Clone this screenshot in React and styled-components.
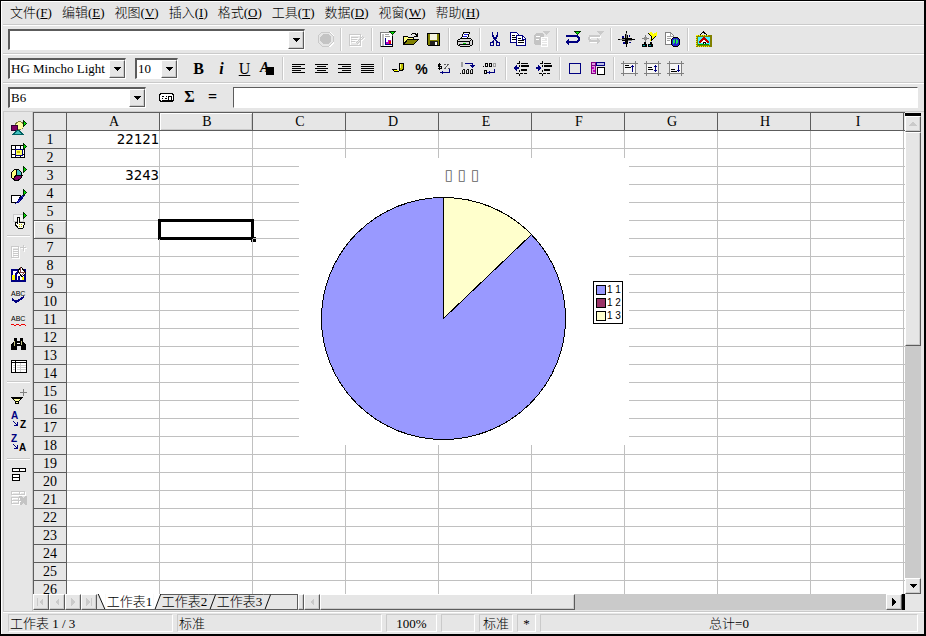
import React, { useState } from 'react'
import styled, { createGlobalStyle, css } from 'styled-components'

const face = '#e6e6e6'
const shade = '#cacaca'
const dark = '#5c5c5c'
const navy = '#000080'

const menus = [
  ['文件', 'F'],
  ['编辑', 'E'],
  ['视图', 'V'],
  ['插入', 'I'],
  ['格式', 'O'],
  ['工具', 'T'],
  ['数据', 'D'],
  ['视窗', 'W'],
  ['帮助', 'H'],
]

const columns = ['A', 'B', 'C', 'D', 'E', 'F', 'G', 'H', 'I', 'J']
const rows = Array.from({ length: 27 }, (_, i) => i + 1)
const cells = { A1: '22121', A3: '3243' }

const legend = [
  { label: '1 1', color: '#9999ff' },
  { label: '1 2', color: '#993366' },
  { label: '1 3', color: '#ffffcc' },
]

const greenFlag = (
  <>
    <path d="M10 0h7v1h-1v1h-1v1h-1v1h-1V3h-1V2h-1V1h-1z" fill="#003000" />
    <path d="M12 1h3v1h-1v1h-1V2h-1z" fill="#00e000" />
  </>
)
const sideFlag = (
  <>
    <path d="M13 0h1v1h1v1h1v1h1v1h-1v1h-1v1h-1v1h-1z" fill="#003000" />
    <path d="M14 2h1v1h1v1h-1v1h-1z" fill="#00e000" />
  </>
)
const embossed = (d) => (
  <>
    <path d={d} stroke="#fff" transform="translate(1 1)" />
    <path d={d} stroke={shade} />
  </>
)
const lines = (d) => <path d={d} stroke="#000" />
const indentLines = (
  <>
    {lines('M4 3.5h3M8 3.5h7M3 13.5h3M7 13.5h3M11 13.5h3M6.5 1v2M6.5 5v2M6.5 10v2M6.5 14v2')}
    <path d="M8 5h8v2H8zM8 9h6v2H8z" fill="#000" />
  </>
)
const cellFrame = (
  <>
    <path d="M3 4h11v9H3z" fill="#f6f6f6" />
    <path d="M2.5 1v15M14.5 1v15M0 3.5h17M0 13.5h17" stroke="#808080" />
  </>
)

const art = {
  stop: (
    <>
      <path d="M5 1h8l4 4v7l-4 4H5l-4-4V5z" fill="#fff" />
      <path d="M5 1h7l4 4v6l-4 4H5l-4-4V5z" fill={face} stroke={shade} />
      <path d="M6 3h5l3 3v4l-3 3H6l-3-3V6z" fill="#c4c4c4" />
    </>
  ),
  editFile: embossed('M1.5 3.5h11v11h-11zM3 6.5h7M3 8.5h6M3 10.5h4M8 12l7-7M9 13l7-7'),
  new: (
    <>
      <path d="M1.5 1.5h12v14h-12z" fill="#fff" stroke="#808080" />
      <path d="M13.5 5v10.5H2" stroke="#000" />
      <path d="M3 3h2v12H3z" fill="#c0c0c0" />
      <path d="M6 3.5h4M6 5.5h5" stroke="#a0a0a0" />
      <path d="M6.5 7v6.500h6" stroke={navy} />
      <path d="M7 13v-2h2V9h3v4z" fill="#c000c0" />
      <path d="M10 10h2v3h-2z" fill="#e00000" />
      {greenFlag}
    </>
  ),
  open: (
    <>
      <path d="M1.5 13.5V5.5h4l1 1h5v3" fill="#ffff80" stroke="#000" />
      <path d="M1.5 13.5l4-5h11l-5 5z" fill="#808000" stroke="#000" />
      <path d="M9 3.5l2-1h2l2 2M15.500 2v3H12" stroke="#000" />
    </>
  ),
  save: (
    <>
      <path d="M2.5 2.5h12v12h-11l-1-1z" fill="#808000" stroke="#000" />
      <path d="M5 3h7v6H5z" fill="#f4f4e0" />
      <path d="M5 10h8v4H5z" fill="#202020" />
      <path d="M10 11h2v3h-2z" fill="#fff" />
    </>
  ),
  print: (
    <>
      <path d="M5.5 7.5l2-6h6l-2 6" fill="#fff" stroke="#000" />
      <path d="M8 3.5h4M7 5.5h4" stroke="#2020e0" />
      <path d="M1.5 9.5l3-2h10l2 2v4l-3 2h-9l-3-2z" fill="#d8d8d8" stroke="#000" />
      <path d="M2 10.5h11l3-2M3 13.5h10M13.5 10v4" stroke="#000" />
      <path d="M7 12.5h3" stroke="#00c000" />
    </>
  ),
  cut: (
    <>
      <path d="M5.500 1v3l2 4M10.500 1v3l-2 4" stroke={navy} strokeWidth="1.500" />
      <path d="M8 8l-3 4M8 8l3 4" stroke={navy} />
      <circle cx="5" cy="13" r="2" stroke={navy} />
      <circle cx="11" cy="13" r="2" stroke={navy} />
    </>
  ),
  copy: (
    <>
      <path d="M.5 1.5h6l2 2v8h-8z" fill="#fff" stroke={navy} />
      <path d="M6.500 4.500h6l3 3v7h-9z" fill="#fff" stroke={navy} />
      <path d="M2 4.500h3M2 6.500h4M2 8.500h4M8 7.500h3M8 9.500h6M8 11.500h6" stroke="#000" />
      <path d="M12.500 5v3h3" stroke={navy} />
    </>
  ),
  paste: (
    <>
      <path d="M3 2h6l2 2v2h4v10H8v-2H2l-1-2V4z" fill="#c4c4c4" />
      <path d="M8.500 6.500h6v9h-6z" fill={face} stroke="#fff" />
      <path d="M9 8.500h3M9 10.500h5M9 12.500h5M3 5.500h4M3 8.500h3" stroke="#fff" />
      <path d="M10 0h7l-3.500 4z" fill={shade} />
    </>
  ),
  undo: (
    <>
      <path d="M2 5h11l2 2v2l-2 2H4" stroke={navy} strokeWidth="2" />
      <path d="M1 11l4-3v6z" fill={navy} />
      {greenFlag}
    </>
  ),
  redo: (
    <>
      <path d="M14 6H4L3 8l1 3h8" stroke="#fff" strokeWidth="2" />
      <path d="M13 5H3L2 7l1 3h8" stroke={shade} strokeWidth="2" />
      <path d="M10 7l4 3-4 3zM10 0h7l-3.500 4z" fill={shade} />
    </>
  ),
  navigator: (
    <>
      <path d="M8 0h1l1 7 7 1v1l-7 1-1 6H8l-1-6-7-1V8l7-1z" fill="#000" />
      <path d="M4 5h2v2H4zM11 4h1v2h-1zM5 11h2v2H5zM11 11h2v1h-2z" fill={navy} />
      <path d="M8.500 2v5M2 8.500h5M10 9.500h4" stroke="#fff" strokeWidth=".500" />
    </>
  ),
  stylist: (
    <>
      <path d="M4.500 4v8M1 7.500h7" stroke="#808080" />
      <path d="M3 6h3v3H3z" fill="#909090" />
      <path d="M7 2l3-1 2 2 4-2v3l-5 6H9l1-4z" fill="#ffff00" />
      <path d="M7 2l4 4-1 4M15 5l-4 4" stroke="#000" />
      <path d="M3 11h2v2h1v3H1v-3h2zM9 11h2v2h1v3H7v-3h2z" fill="#000" />
      <path d="M2 14h2v1H2zM8 14h2v1H8z" fill="#00a0a0" />
    </>
  ),
  hyperlink: (
    <>
      <path d="M1.500 1.500h5l3 3v9h-8z" fill="#fff" stroke="#808080" />
      <path d="M3 5.500h3M3 7.500h4M3 9.500h3M6.500 2v3h3" stroke="#a0a0a0" />
      <circle cx="11.500" cy="11" r="4.500" fill="#2020d0" stroke="#000" />
      <path d="M9 9l2-1v3l-2 2zM12 8l2 1v3l-2 1z" fill="#20e060" />
    </>
  ),
  gallery: (
    <>
      <path d="M5 4l3.500-3L12 4" stroke="#000" />
      <path d="M1.500 4.500h14v10h-14z" fill="#40f0ff" stroke="#808000" strokeWidth="2" />
      <path d="M1.500 4v11H15M2 4.500h12" stroke="#ffff00" strokeDasharray="1 1" />
      <path d="M4 12l5-5 5 5" fill="#fff" stroke="#c00000" strokeWidth="1.500" />
      <path d="M8.500 14v-3h2v3" fill="#fff" stroke="#000" />
      <path d="M3 13.500h11" stroke="#00a000" />
    </>
  ),
  fontColor: (
    <>
      <text x="1" y="12" fontFamily="Liberation Serif" fontSize="14" fontWeight="700" fontStyle="italic" fill="#000">A</text>
      <path d="M7 7h8v8H7z" fill="#000" />
    </>
  ),
  left: lines('M2 4.500h13M2 6.500h9M2 8.500h13M2 10.500h9M2 12.500h13'),
  center: lines('M2 4.500h13M4 6.500h9M2 8.500h13M4 10.500h9M2 12.500h13'),
  right: lines('M2 4.500h13M6 6.500h9M2 8.500h13M6 10.500h9M2 12.500h13'),
  justify: lines('M2 4.500h13M2 6.500h13M2 8.500h13M2 10.500h13M2 12.500h13'),
  currency: (
    <>
      <path d="M9.500 3.500h4v6l-2 1h-2z" fill="#c0c000" stroke="#000" />
      <path d="M2 9.500h5M3 10.500l2 1h4" stroke="#000" />
      <path d="M3 10h4l1 1H5z" fill="#ffff00" />
      <path d="M10.500 4v4" stroke="#ffff80" />
    </>
  ),
  standard: (
    <>
      <path d="M5 4.500H2v2h3v2H2M3.500 3v7" stroke="#000" />
      <path d="M8.500 9l4-5M8 4.500h2M12 8.500h2" stroke="#606060" />
      <path d="M13.500 9v3.500H6" stroke={navy} />
      <path d="M4 12.500l3-2v4z" fill={navy} />
    </>
  ),
  addDecimal: (
    <>
      <path d="M2.500 2.500h1v4h-1z" stroke="#a0a0a0" />
      <path d="M6 3.500h7.500v3" stroke={navy} />
      <path d="M11 5h5l-2.500 3z" fill={navy} />
      <path d="M1 13.500h1M3.500 9.500h2v4h-2zM7.500 9.500h2v4h-2zM11.500 9.500h2v4h-2z" stroke="#000" strokeWidth=".900" />
    </>
  ),
  delDecimal: (
    <>
      <path d="M1 6.500h1M3.500 3.500h2v3h-2zM7.500 3.500h2v3h-2zM2.500 10.500h2v3h-2z" stroke="#000" />
      <path d="M11.500 3.500h2v3h-2z" stroke="#a0a0a0" />
      <path d="M12.500 9v3.500H8" stroke={navy} />
      <path d="M5 12.500l3-2v4z" fill={navy} />
    </>
  ),
  outdent: (
    <>
      {indentLines}
      <path d="M2 8h4" stroke={navy} strokeWidth="2" />
      <path d="M0 8l4-3v6z" fill={navy} />
    </>
  ),
  indent: (
    <>
      {indentLines}
      <path d="M0 8h4" stroke={navy} strokeWidth="2" />
      <path d="M6 8L2 5v6z" fill={navy} />
    </>
  ),
  border: <path d="M2.500 3.500h11v10h-11z" stroke={navy} />,
  background: (
    <>
      <path d="M1.500 2.500h4v3h-4zM1.500 5.500h4v8h-4z" fill="#e0a0e0" stroke="#800080" />
      <path d="M6.500 2.500h8v3h-8z" fill="#c0c0e8" stroke={navy} />
      <path d="M2 7h2v2H2zM3 10h2v2H3z" fill="#c000c0" />
      <path d="M7.500 7.500h7v7h-7z" fill="#fff" stroke="#000" />
    </>
  ),
  top: (
    <>
      {cellFrame}
      {lines('M4 5.500h4M4 7.500h6')}
      <path d="M11.500 5v7M10 6.500h3" stroke={navy} />
    </>
  ),
  middle: (
    <>
      {cellFrame}
      {lines('M4 7.500h4M4 9.500h5')}
      <path d="M11.500 5v7M10 6.500h3M10 10.500h3" stroke={navy} />
    </>
  ),
  bottom: (
    <>
      {cellFrame}
      {lines('M4 9.500h4M4 11.500h6')}
      <path d="M11.500 5v7M10 10.500h3" stroke={navy} />
    </>
  ),
  wizard: (
    <>
      <path d="M2.500 4.500h12v1h1v6h-1v1h-12v-1h-1v-6h1z" fill="#fff" stroke="#000" />
      {lines('M4 7.500h2M8 7.500h1M11 7.500h3M4 9.500h1M7 9.500h2M10.500 7v4M13.500 7v4M4 11.500h10')}
    </>
  ),
  insert: (
    <>
      <circle cx="9.500" cy="5.500" r="4" fill="#ffffa0" stroke="#808040" />
      <path d="M1.500 5.500h6v5h-6z" fill="#800060" stroke="#300030" />
      <path d="M3 14.500l4-4h2l4 4z" fill="#40c0c0" stroke="#006060" />
      {sideFlag}
    </>
  ),
  insertCells: (
    <>
      <path d="M1.500 2.500h13v12h-13z" fill="#fff" stroke="#000" />
      <path d="M1 6.500h14M1 11.500h14M5.500 2v13M10.500 2v13" stroke="#000" />
      <path d="M5 6h7v6H5z" fill="#ffff60" stroke={navy} />
      <path d="M7 8h3v2H7z" fill="#c0c000" />
      {sideFlag}
    </>
  ),
  insertChart: (
    <>
      <circle cx="6.500" cy="9" r="5.500" fill="#ffff80" stroke="#000" />
      <path d="M6.500 9V3.500A5.500 5.500 0 0 1 12 9z" fill="#40c0c0" stroke="#000" />
      <path d="M6.500 9H12a5.500 5.500 0 0 1-9 4z" fill="#800060" stroke="#000" />
      {sideFlag}
    </>
  ),
  draw: (
    <>
      <path d="M1.500 6.500h9l-3 7h-6z" fill="#fff" stroke="#000" />
      <path d="M6 14l8-9 1 1-6 7z" fill="#4040e0" stroke={navy} />
      {sideFlag}
    </>
  ),
  form: (
    <>
      <path d="M3 2h10v7H3z" fill="#f4f4f4" stroke={shade} />
      <path d="M7.500 11V5.500H9V10h5v3l-1 3H8l-3-4v-2z" fill="#fffff0" stroke="#000" />
      <path d="M9 12.500h4M9 14.500h3" stroke="#c0c000" strokeDasharray="1 1" />
      {sideFlag}
    </>
  ),
  autoText: embossed('M1.500 3.500h7v11h-7zM3 6.500h5M3 8.500h5M3 10.500h5M3 12.500h5M10 4.500h6M13.500 2v6'),
  autoFormat: (
    <>
      <path d="M1.500 3.500h13v11h-13z" fill="#fff" stroke={navy} strokeWidth="2" />
      <path d="M2 14V9h3v5zM12 11h2v3h-2z" fill="#ffff00" />
      <path d="M5.500 14V8l3-2M9 10v4" stroke={navy} strokeWidth="2" />
      <path d="M8 5l3-4 5 6-4 4z" fill="#fff" stroke="#000" />
      <path d="M10.500 1v5M9 6h6l-3 3" stroke="#804040" />
    </>
  ),
  spellcheck: (
    <>
      <text x="1" y="7" fontFamily="Liberation Sans" fontSize="7" fill="#000">ABC</text>
      <path d="M2 10l4 3 8-5" stroke={navy} strokeWidth="2" />
    </>
  ),
  autoSpell: (
    <>
      <text x="1" y="9" fontFamily="Liberation Sans" fontSize="7" fill="#000">ABC</text>
      <path d="M1 13l2-1 2 1.500 3-1.500 2 1.500 3-1.500 3 1.500" stroke="#f00000" />
    </>
  ),
  find: (
    <>
      <path d="M4 3h3v3h3V3h3v3l3 4v5h-5v-4H7v4H1v-5l3-4z" fill="#000" />
      <path d="M4.500 6v5M11.500 6v4" stroke="#c0c080" />
      <path d="M7 8h3" stroke="#fff" />
    </>
  ),
  dataSource: (
    <>
      <path d="M1.500 2.500h15v12h-15z" fill="#fff" stroke="#000" />
      <path d="M2 4.500h14M5.500 3v11" stroke="#000" />
      <path d="M3 7.500h2M3 9.500h2M3 11.500h2M7 7.500h9M7 9.500h9M7 11.500h9M10.500 5v9" stroke="#d0d0d0" />
    </>
  ),
  filter: (
    <>
      <path d="M13.500 0v7M10 3.500h7" stroke="#808080" />
      <path d="M1.500 8.500h11l-4 4v2h-3v-2z" fill="#ffffa0" stroke="#000" />
      {lines('M2 9.500h10M5 12.500h4')}
    </>
  ),
  sortAsc: (
    <>
      <text x="1" y="7" fontFamily="Liberation Sans" fontSize="10" fontWeight="700" fill={navy}>A</text>
      <text x="10" y="16" fontFamily="Liberation Sans" fontSize="10" fontWeight="700" fill="#000">Z</text>
      <path d="M3 9l4 4M7.500 10v3.500H4" stroke={navy} />
    </>
  ),
  sortDesc: (
    <>
      <text x="1" y="7" fontFamily="Liberation Sans" fontSize="10" fontWeight="700" fill={navy}>Z</text>
      <text x="9" y="16" fontFamily="Liberation Sans" fontSize="10" fontWeight="700" fill="#000">A</text>
      <path d="M3 9l4 4M7.500 10v3.500H4" stroke={navy} />
    </>
  ),
  group: (
    <>
      <path d="M2.500 2.500h13v3h-13zM2.500 8.500h7v6h-7z" fill="#fff" stroke="#000" />
      {lines('M9.500 2v4M2 11.500h8')}
    </>
  ),
  ungroup: (
    <>
      <path d="M9 7h2l2 2 2-2h2v9h-2l-2-2-2 2H9z" fill="#c4c4c4" />
      {embossed('M1.500 2.500h13v3h-13zM1.500 8.500h7v6h-7zM9.500 2v4M2 11.500h8')}
    </>
  ),
  first: <path d="M4 4h1v8H4zM10 4v8L6 8z" fill={shade} />,
  prev: <path d="M10 4v8L6 8z" fill={shade} />,
  next: <path d="M6 4v8l4-4z" fill={shade} />,
  last: <path d="M10 4h1v8h-1zM5 4v8l4-4z" fill={shade} />,
  play: <path d="M6 4v8l4-4z" fill="#000" />,
  up: <path d="M4 10h8L8 5z" fill={shade} />,
  down: <path d="M4 6h8l-4 4z" fill="#000" />,
}

const tools = [
  ['stop'],
  ['editFile'],
  ['new', 'open', 'save'],
  ['print'],
  ['cut', 'copy', 'paste'],
  ['undo', 'redo'],
  ['navigator', 'stylist', 'hyperlink'],
  ['gallery'],
]
const objectTools = [
  ['left', 'center', 'right', 'justify'],
  ['currency', 'percent', 'standard', 'addDecimal', 'delDecimal'],
  ['outdent', 'indent'],
  ['border', 'background'],
  ['top', 'middle', 'bottom'],
]
const sideTools = [
  ['insert', 'insertCells', 'insertChart', 'draw', 'form'],
  ['autoText', 'autoFormat', 'spellcheck', 'autoSpell', 'find', 'dataSource'],
  ['filter', 'sortAsc', 'sortDesc'],
  ['group', 'ungroup'],
]

const Glyph = ({ name, size = 17 }) => (
  <svg width={size} height={size} viewBox={`0 0 ${size} ${size}`} fill="none" shapeRendering="crispEdges" aria-hidden="true">
    {art[name]}
  </svg>
)

const ToolGroups = ({ groups, vertical }) =>
  groups.map((group, i) => (
    <React.Fragment key={group[0]}>
      {i > 0 && <Separator $vertical={vertical} />}
      {group.map((name) => (
        <ToolButton key={name} aria-label={name}>
          {name === 'percent' ? <Letter $sans>%</Letter> : <Glyph name={name} />}
        </ToolButton>
      ))}
    </React.Fragment>
  ))

const Combo = ({ label, options, width }) => (
  <ComboBox $width={width}>
    <select aria-label={label}>
      {options.map((option) => (
        <option key={option}>{option}</option>
      ))}
    </select>
    <ComboArrow>
      <Glyph name="down" size={16} />
    </ComboArrow>
  </ComboBox>
)

const Chart = () => (
  <ChartFrame>
    <ChartTitle>▯ ▯ ▯</ChartTitle>
    <Pie width="246" height="244" viewBox="0 0 246 244" shapeRendering="crispEdges" role="img" aria-label="pie">
      <ellipse cx="122.500" cy="121.500" rx="122" ry="121" fill="#9999ff" stroke="#000" />
      <path d="M122.500 121.500V.500A122 121 0 0 1 210.500 37.500Z" fill="#ffffcc" stroke="#000" />
    </Pie>
    <Legend>
      {legend.map((item) => (
        <li key={item.label}>
          <Swatch $color={item.color} />
          {item.label}
        </li>
      ))}
    </Legend>
  </ChartFrame>
)

export default function App() {
  const [selected, setSelected] = useState('B6')
  const [sheet, setSheet] = useState(1)

  return (
    <Window>
      <GlobalStyle />
      <MenuBar>
        {menus.map(([text, key]) => (
          <button key={key}>
            {text}(<u>{key}</u>)
          </button>
        ))}
      </MenuBar>

      <Toolbar>
        <Combo label="URL" options={['']} width={297} />
        <Tools $gap={9}>
          <ToolGroups groups={tools} />
        </Tools>
      </Toolbar>

      <Toolbar>
        <Combo label="font" options={['HG Mincho Light']} width={118} />
        <Tools $gap={9}>
          <Combo label="size" options={['10']} width={43} />
        </Tools>
        <Tools $gap={9}>
          <ToolButton aria-label="bold"><Letter $bold>B</Letter></ToolButton>
          <ToolButton aria-label="italic"><Letter $bold $italic>i</Letter></ToolButton>
          <ToolButton aria-label="underline"><Letter $underline>U</Letter></ToolButton>
          <ToolButton aria-label="font color"><Glyph name="fontColor" /></ToolButton>
          <Separator />
          <ToolGroups groups={objectTools} />
        </Tools>
      </Toolbar>

      <Toolbar $last>
        <Combo label="cell" options={[selected]} width={138} />
        <Tools $gap={9}>
          <ToolButton aria-label="function"><Glyph name="wizard" /></ToolButton>
          <ToolButton aria-label="sum"><Letter $bold>Σ</Letter></ToolButton>
          <ToolButton aria-label="equals"><Letter $bold>=</Letter></ToolButton>
        </Tools>
        <FormulaInput aria-label="formula" />
      </Toolbar>

      <Body>
        <SideBar>
          <ToolGroups groups={sideTools} vertical />
        </SideBar>

        <Sheet>
          <Viewport>
            <Grid>
              <colgroup>
                <col className="rows" />
                {columns.map((c) => (
                  <col key={c} />
                ))}
              </colgroup>
              <thead>
                <tr>
                  <Head />
                  {columns.map((c) => (
                    <Head key={c} scope="col" $active={selected[0] === c}>{c}</Head>
                  ))}
                </tr>
              </thead>
              <tbody>
                {rows.map((r) => (
                  <tr key={r}>
                    <Head scope="row" $active={selected.slice(1) === String(r)}>{r}</Head>
                    {columns.map((c) => (
                      <Cell key={c} onClick={() => setSelected(c + r)}>
                        {cells[c + r]}
                        {selected === c + r && <Cursor />}
                      </Cell>
                    ))}
                  </tr>
                ))}
              </tbody>
            </Grid>
            <Chart />
          </Viewport>

          <BottomBar>
            {['first', 'prev', 'next', 'last'].map((name) => (
              <ScrollButton key={name} aria-label={name}>
                <Glyph name={name} size={16} />
              </ScrollButton>
            ))}
            <Slant width="9" height="16" viewBox="0 0 9 16">
              {sheet === 1 && <path d="M1 0l7 16h1V0z" fill="#fff" />}
              <path d="M1 0l7 16" stroke="#000" />
            </Slant>
            {[1, 2, 3].map((n) => (
              <React.Fragment key={n}>
                <Tab $active={sheet === n} onClick={() => setSheet(n)}>工作表{n}</Tab>
                <Slant width="8" height="16" viewBox="0 0 8 16">
                  {sheet === n && <path d="M0 0h8L2 16H0z" fill="#fff" />}
                  <path d="M2 16L8 0" stroke="#000" />
                  {sheet !== n && <path d="M0 .5h8" stroke={dark} />}
                </Slant>
              </React.Fragment>
            ))}
            <TabEnd />
            <Splitter />
            <ScrollButton aria-label="scroll left"><Glyph name="prev" size={16} /></ScrollButton>
            <Track><Thumb $width="45%" /></Track>
            <ScrollButton aria-label="scroll right"><Glyph name="play" size={16} /></ScrollButton>
            <SplitEnd />
          </BottomBar>
        </Sheet>

        <SideScroll>
          <ScrollButton aria-label="scroll up"><Glyph name="up" size={16} /></ScrollButton>
          <Track><Thumb $height="48%" /></Track>
          <ScrollButton aria-label="scroll down"><Glyph name="down" size={16} /></ScrollButton>
        </SideScroll>
      </Body>

      <StatusBar>
        <Field $width={165}>工作表 1 / 3</Field>
        <Field $width={205}>标准</Field>
        <Field $width={51} $center>100%</Field>
        <Field $width={34} />
        <Field $width={34} $center>标准</Field>
        <Field $width={19} $center>*</Field>
        <Field $center>总计=0</Field>
      </StatusBar>
    </Window>
  )
}

const GlobalStyle = createGlobalStyle`
* {
  box-sizing: border-box;
}
body {
  margin: 0;
  overflow: hidden;
}
button, select, input, table {
  font: inherit;
  color: inherit;
}
button {
  padding: 0;
  border: none;
  background: none;
}
svg {
  display: block;
  flex: none;
  overflow: visible;
}
`

const raised = css`
  background: ${face};
  border: 1px solid;
  border-color: #fff ${dark} ${dark} #fff;
  box-shadow: inset -1px -1px ${shade};
`

const Window = styled.div`
  display: flex;
  flex-direction: column;
  height: 100vh;
  padding-left: 2px;
  border: solid #000;
  border-width: 1px 2px 2px 1px;
  background: ${face};
  box-shadow: inset 1px 1px #fff;
  color: #000;
  font: 300 13px/16px 'Liberation Serif', 'Noto Sans CJK SC', serif;
`

const MenuBar = styled.nav`
  display: flex;
  flex: none;
  align-items: center;
  gap: 10px;
  height: 25px;
  padding-left: 7px;
  border-bottom: 1px solid #fff;
  box-shadow: inset 0 -1px ${shade};
`

const Toolbar = styled.div`
  display: flex;
  flex: none;
  align-items: center;
  height: ${(p) => (p.$last ? 28 : 29)}px;
  padding: 0 6px 1px 5px;
  border-bottom: 1px solid ${(p) => (p.$last ? shade : '#fff')};
  box-shadow: ${(p) => (p.$last ? 'none' : `inset 0 -1px ${shade}`)};
`

const Tools = styled.div`
  display: flex;
  align-items: center;
  padding-left: ${(p) => p.$gap}px;
`

const ToolButton = styled.button`
  display: flex;
  flex: none;
  align-items: center;
  justify-content: center;
  width: 23px;
  height: 23px;
`

const Separator = styled.span`
  flex: none;
  width: 8px;
  height: 23px;
  border: solid transparent;
  border-width: 0 3px;
  background: linear-gradient(90deg, ${shade} 50%, #fff 50%) padding-box;

  ${(p) =>
    p.$vertical &&
    css`
      width: 23px;
      height: 8px;
      border-width: 3px 0;
      background: linear-gradient(${shade} 50%, #fff 50%) padding-box;
    `}
`

const Letter = styled.span`
  font-family: ${(p) => (p.$sans ? "'Liberation Sans', sans-serif" : "'Liberation Serif', serif")};
  font-size: ${(p) => (p.$sans ? 14 : 16)}px;
  font-weight: ${(p) => (p.$bold || p.$sans ? 700 : 400)};
  font-style: ${(p) => (p.$italic ? 'italic' : 'normal')};
  text-decoration: ${(p) => (p.$underline ? 'underline' : 'none')};
`

const ComboBox = styled.span`
  display: grid;
  flex: none;
  width: ${(p) => p.$width}px;
  height: 21px;
  border: 2px solid;
  border-width: 2px 1px 1px 2px;
  border-color: ${dark} #fff #fff ${dark};
  background: #fff;

  select {
    grid-area: 1 / 1;
    min-width: 0;
    padding: 0 16px 0 1px;
    border: none;
    background: none;
    appearance: none;
    line-height: 18px;
  }
`

const ComboArrow = styled.span`
  display: flex;
  grid-area: 1 / 1;
  align-items: center;
  justify-content: center;
  justify-self: end;
  width: 16px;
  overflow: hidden;
  pointer-events: none;
  ${raised}
`

const FormulaInput = styled.input`
  flex: 1;
  min-width: 0;
  height: 21px;
  margin-left: 9px;
  padding: 0 4px;
  border: 1px solid;
  border-color: ${dark} #fff #fff ${dark};
  background: #fff;
`

const Body = styled.main`
  display: flex;
  flex: 1;
  min-height: 0;
  padding-right: 3px;
`

const SideBar = styled.aside`
  display: flex;
  flex: none;
  flex-direction: column;
  align-items: center;
  width: 30px;
  padding-top: 5px;
  border: solid ${shade};
  border-width: 0 1px;
`

const Sheet = styled.section`
  display: flex;
  flex: 1;
  flex-direction: column;
  min-width: 0;
`

const Viewport = styled.div`
  position: relative;
  flex: 1;
  min-height: 0;
  overflow: hidden;
  background: #fff;
`

const Grid = styled.table`
  width: 964px;
  table-layout: fixed;
  border-spacing: 0;

  .rows {
    width: 34px;
  }
`

const Head = styled.th`
  height: 18px;
  padding: 0;
  border: solid ${dark};
  border-width: 0 1px 1px 0;
  background: ${face};
  box-shadow: ${(p) => (p.$active ? `inset 1px 1px #fff, inset -1px -1px ${shade}` : 'none')};
  font-size: 14px;
  font-weight: 400;
  line-height: 17px;

  thead & {
    height: 19px;
    padding: 1px 0 0 2px;
    border-top-width: 1px;
    line-height: 16px;
  }
  &:first-child {
    border-left-width: 1px;
  }
`

const Cell = styled.td`
  position: relative;
  height: 18px;
  padding: 0;
  border: solid #c0c0c0;
  border-width: 0 1px 1px 0;
  font: 14px/17px 'DejaVu Sans Mono', monospace;
  text-align: right;
`

/* outline of the current cell with its fill handle */
const Cursor = styled.span`
  position: absolute;
  inset: -2px;
  border: 2px solid #000;
  outline: 1px solid #000;
  outline-offset: -3px;

  &::after {
    content: '';
    position: absolute;
    right: -4px;
    bottom: -4px;
    width: 5px;
    height: 5px;
    background: #000;
  }
`

const ChartFrame = styled.figure`
  position: absolute;
  top: 46px;
  left: 266px;
  display: grid;
  grid-template: 31px 244px / 246px 30px;
  column-gap: 26px;
  width: 330px;
  height: 287px;
  margin: 0;
  padding: 8px 6px 4px 22px;
  background: #fff;
`

const ChartTitle = styled.figcaption`
  grid-area: 1 / 1;
  padding-left: 36px;
  color: #606060;
  font: 15px/18px 'DejaVu Sans', sans-serif;
  text-align: center;
`

const Pie = styled.svg`
  grid-area: 2 / 1;
`

const Legend = styled.ul`
  grid-area: 2 / 2;
  width: 30px;
  height: 43px;
  margin: 84px 0 0;
  padding: 1px 2px;
  border: 1px solid #000;
  list-style: none;
  font: 10px/13px 'Liberation Sans', sans-serif;
  white-space: nowrap;

  li {
    display: flex;
    align-items: center;
    gap: 1px;
  }
`

const Swatch = styled.span`
  flex: none;
  width: 10px;
  height: 10px;
  border: 1px solid #000;
  background: ${(p) => p.$color};
`

const BottomBar = styled.div`
  display: flex;
  flex: none;
  height: 16px;
  margin-bottom: 1px;
`

const ScrollButton = styled.button`
  display: flex;
  flex: none;
  align-items: center;
  justify-content: center;
  width: 16px;
  height: 16px;
  overflow: hidden;
  ${raised}
`

const Slant = styled.svg`
  border-bottom: 1px solid ${dark};
`

const Tab = styled.button`
  flex: none;
  width: 47px;
  border-bottom: 1px solid ${dark};
  border-top: 1px solid ${(p) => (p.$active ? '#fff' : dark)};
  background: ${(p) => (p.$active ? '#fff' : face)};
  line-height: 14px;
  white-space: nowrap;
`

const TabEnd = styled.span`
  flex: none;
  width: 27px;
  border: solid ${dark};
  border-width: 1px 1px 1px 0;
`

const Splitter = styled.span`
  flex: none;
  width: 6px;
  ${raised}
`

const Track = styled.div`
  flex: 1;
  min-width: 0;
  min-height: 0;
  background: ${shade};
`

const Thumb = styled.div`
  width: ${(p) => p.$width || '100%'};
  height: ${(p) => p.$height || '100%'};
  ${raised}
`

const SplitEnd = styled.span`
  flex: none;
  width: 3px;
  background: #000;
`

const SideScroll = styled.div`
  display: flex;
  flex: none;
  flex-direction: column;
  width: 16px;
  margin: 1px 0 17px;
  border-top: 3px solid #000;
`

const StatusBar = styled.footer`
  display: flex;
  flex: none;
  gap: 4px;
  height: 23px;
  padding: 2px 6px 2px 5px;
  border-top: 1px solid ${shade};
  box-shadow: inset 0 1px #fff;
`

const Field = styled.span`
  flex: ${(p) => (p.$width ? `0 0 ${p.$width}px` : 1)};
  padding-left: ${(p) => (p.$center ? 0 : 1)}px;
  border: 1px solid;
  border-color: ${shade} #fff #fff ${shade};
  line-height: 17px;
  text-align: ${(p) => (p.$center ? 'center' : 'left')};
  white-space: nowrap;
`
